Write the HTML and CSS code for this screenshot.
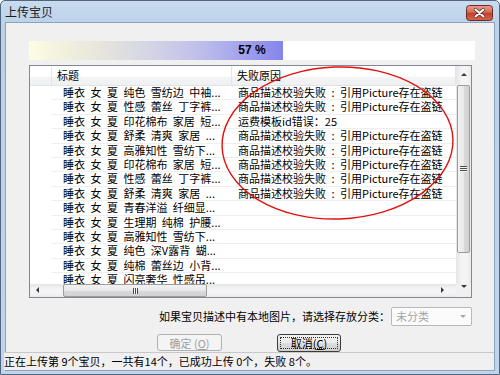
FILE: index.html
```html
<!DOCTYPE html>
<html lang="zh">
<head>
<meta charset="utf-8">
<title>上传宝贝</title>
<link rel="stylesheet" href="styles.css">
</head>
<body>
<div class="window">
  <div class="titlebar">
    <span class="title">上传宝贝</span>
    <div class="close">
      <svg width="27" height="16" viewBox="0 0 27 16">
        <defs>
          <linearGradient id="cg" x1="0" y1="0" x2="0" y2="1">
            <stop offset="0" stop-color="#e8a090"/>
            <stop offset="0.45" stop-color="#d46a58"/>
            <stop offset="0.5" stop-color="#c2402c"/>
            <stop offset="1" stop-color="#d5664c"/>
          </linearGradient>
        </defs>
        <rect x="0.5" y="0.5" width="26" height="15" rx="3" fill="url(#cg)" stroke="#6e2a22"/>
        <path d="M9.5 4.5 L17.5 11.5 M17.5 4.5 L9.5 11.5" stroke="#5a1e18" stroke-width="3.2" stroke-linecap="round"/>
        <path d="M9.5 4.5 L17.5 11.5 M17.5 4.5 L9.5 11.5" stroke="#ffffff" stroke-width="2" stroke-linecap="round"/>
      </svg>
    </div>
  </div>
  <div class="client">
    <div class="progress">
      <div class="fill" style="width:57%"></div>
      <span class="pct">57 %</span>
    </div>
    <div class="list">
      <div class="list-main">
        <div class="list-body">
          <div class="row head">
            <div class="cell rh"></div>
            <div class="cell c1">标题</div>
            <div class="cell c2">失败原因</div>
          </div>
          <div class="row"><div class="cell rh"></div><div class="cell c1">睡衣 女 夏 纯色 雪纺边 中袖...</div><div class="cell c2">商品描述校验失败 : 引用Picture存在盗链</div></div>
          <div class="row"><div class="cell rh"></div><div class="cell c1">睡衣 女 夏 性感 蕾丝 丁字裤...</div><div class="cell c2">商品描述校验失败 : 引用Picture存在盗链</div></div>
          <div class="row"><div class="cell rh"></div><div class="cell c1">睡衣 女 夏 印花棉布 家居 短...</div><div class="cell c2">运费模板id错误：25</div></div>
          <div class="row"><div class="cell rh"></div><div class="cell c1">睡衣 女 夏 舒柔 清爽 家居 ...</div><div class="cell c2">商品描述校验失败 : 引用Picture存在盗链</div></div>
          <div class="row"><div class="cell rh"></div><div class="cell c1">睡衣 女 夏 高雅知性 雪纺下...</div><div class="cell c2">商品描述校验失败 : 引用Picture存在盗链</div></div>
          <div class="row"><div class="cell rh"></div><div class="cell c1">睡衣 女 夏 印花棉布 家居 短...</div><div class="cell c2">商品描述校验失败 : 引用Picture存在盗链</div></div>
          <div class="row"><div class="cell rh"></div><div class="cell c1">睡衣 女 夏 性感 蕾丝 丁字裤...</div><div class="cell c2">商品描述校验失败 : 引用Picture存在盗链</div></div>
          <div class="row"><div class="cell rh"></div><div class="cell c1">睡衣 女 夏 舒柔 清爽 家居 ...</div><div class="cell c2">商品描述校验失败 : 引用Picture存在盗链</div></div>
          <div class="row"><div class="cell rh"></div><div class="cell c1">睡衣 女 夏 青春洋溢 纤细显...</div><div class="cell c2"></div></div>
          <div class="row"><div class="cell rh"></div><div class="cell c1">睡衣 女 夏 生理期 纯棉 护腰...</div><div class="cell c2"></div></div>
          <div class="row"><div class="cell rh"></div><div class="cell c1">睡衣 女 夏 高雅知性 雪纺下...</div><div class="cell c2"></div></div>
          <div class="row"><div class="cell rh"></div><div class="cell c1">睡衣 女 夏 纯色 深V露背 蝴...</div><div class="cell c2"></div></div>
          <div class="row"><div class="cell rh"></div><div class="cell c1">睡衣 女 夏 纯棉 蕾丝边 小背...</div><div class="cell c2"></div></div>
          <div class="row"><div class="cell rh"></div><div class="cell c1">睡衣 女 夏 闪亮奢华 性感吊...</div><div class="cell c2"></div></div>
        </div>
        <div class="vscroll">
          <div class="arrow up"></div>
          <div class="vtrack">
            <div class="vthumb"><span class="grip-h"></span></div>
          </div>
          <div class="arrow down"></div>
        </div>
      </div>
      <div class="hscroll-row">
        <div class="hscroll">
          <div class="arrow left"></div>
          <div class="htrack">
            <div class="hthumb"><span class="grip-v"></span></div>
          </div>
          <div class="arrow right"></div>
        </div>
        <div class="corner"></div>
      </div>
    </div>
    <div class="opts">
      <span class="opt-label">如果宝贝描述中有本地图片，请选择存放分类：</span>
      <div class="combo">
        <span class="combo-text">未分类</span>
        <span class="combo-arrow"></span>
      </div>
    </div>
    <div class="buttons">
      <div class="btn disabled">确定 (<u>O</u>)</div>
      <div class="btn focused"><span class="btn-inner">取消(<u>C</u>)</span></div>
    </div>
    <div class="status">正在上传第 9个宝贝，一共有14个，已成功上传 0个，失败 8个。</div>
  </div>
  <svg class="mark" width="500" height="375" viewBox="0 0 500 375">
    <ellipse cx="337.5" cy="143" rx="115.5" ry="76" fill="none" stroke="#e41010" stroke-width="1.4" transform="rotate(-2 337.5 143)"/>
  </svg>
</div>
</body>
</html>
```
FILE: styles.css
```css
* { box-sizing: border-box; }
html, body { margin: 0; padding: 0; }
body {
  width: 500px;
  height: 375px;
  overflow: hidden;
  font-family: "Noto Sans CJK SC", "Liberation Sans", sans-serif;
  font-size: 11px;
  color: #000;
  background: #ffffff;
}
.window {
  position: relative;
  width: 500px;
  height: 375px;
  border: 1px solid #50677f;
  border-radius: 5px 5px 0 0;
  background: linear-gradient(#c9dbee, #bcd2ea 22px, #c0d5eb);
  display: flex;
  flex-direction: column;
}
.titlebar {
  height: 21px;
  display: flex;
  align-items: center;
  padding: 0 4px 0 4px;
  flex: none;
}
.title {
  font-size: 12px;
  line-height: 14px;
  color: #1a1a1a;
  margin-top: 1px;
}
.close {
  margin-left: auto;
  margin-top: 2px;
  width: 27px;
  height: 16px;
  margin-right: 2px;
}
.close svg { display: block; }
.client {
  flex: 1;
  margin: 0 4px 4px 4px;
  border: 1px solid #8ca3bc;
  background: #f0f0f0;
  display: flex;
  flex-direction: column;
}
.progress {
  position: relative;
  margin: 18px 0 0 23px;
  width: 446px;
  height: 19px;
  background: #ffffff;
  flex: none;
}
.fill {
  height: 100%;
  background: linear-gradient(to right, #fefde4, #f2f2de 12%, #e4e4dd 30%, #d2d2e6 50%, #bdbdeb 68%, #a2a2ed 84%, #8585ea 100%);
}
.pct {
  position: absolute;
  left: 0;
  right: 0;
  top: 0;
  line-height: 19px;
  text-align: center;
  font-family: "Liberation Sans", sans-serif;
  font-weight: bold;
  font-size: 12px;
}
.list {
  margin: 5px 0 0 23px;
  width: 443px;
  height: 233px;
  border: 1px solid #828790;
  background: #ffffff;
  display: flex;
  flex-direction: column;
  flex: none;
}
.list-main {
  display: flex;
  height: 218px;
}
.list-body {
  width: 426px;
  overflow: hidden;
}
.row {
  display: grid;
  grid-template-columns: 22px 180px 224px;
  height: 14.4px;
  line-height: 13px;
  white-space: nowrap;
}
.cell {
  overflow: hidden;
  word-spacing: 3px;
}
.row .c1, .row .c2 { border-bottom: 1px solid #efefef; }
.row .c1 { padding-left: 11px; }
.row .c2 { padding-left: 6px; }
.row.head {
  height: 20px;
  line-height: 19px;
  background: linear-gradient(#ffffff 0, #ffffff 55%, #f3f4f6 55%, #eff0f2 100%);
}
.row.head .cell {
  border-bottom: 1px solid #e2e3e5;
  border-right: 1px solid #e3e4e6;
}
.row.head .c1 { padding-left: 5px; }
.row.head .c2 { padding-left: 5px; }

.vscroll {
  width: 15px;
  background: linear-gradient(to right, #e6e6e6, #f4f4f4 40%, #f4f4f4 70%, #eaeaea);
  display: flex;
  flex-direction: column;
  align-items: center;
}
.arrow { flex: none; position: relative; }
.arrow.up, .arrow.down { width: 15px; height: 17px; }
.arrow.up::after, .arrow.down::after {
  content: "";
  position: absolute;
  left: 5px;
  border-left: 3px solid transparent;
  border-right: 3px solid transparent;
}
.arrow.up::after { top: 7px; border-bottom: 3px solid #3a3a3a; }
.arrow.down::after { top: 8px; border-top: 3px solid #3a3a3a; }
.vtrack {
  flex: 1;
  width: 15px;
  padding: 2px 1px 24px 1px;
}
.vthumb {
  height: 168px;
  border: 1px solid #9c9c9c;
  border-radius: 2px;
  background: linear-gradient(to right, #f3f3f3, #e8e8e8 50%, #d9d9d9 51%, #d2d2d2);
  display: flex;
  align-items: center;
  justify-content: center;
}
.grip-h {
  width: 7px;
  height: 6px;
  background: repeating-linear-gradient(#4a4a4a 0 1px, #f4f4f4 1px 2px);
  margin-top: 0;
}
.hscroll-row {
  display: flex;
  height: 13px;
}
.hscroll {
  width: 426px;
  display: flex;
  align-items: stretch;
  background: linear-gradient(#e6e6e6, #f4f4f4 40%, #f4f4f4 70%, #eaeaea);
}
.arrow.left, .arrow.right { width: 17px; }
.arrow.left::after, .arrow.right::after {
  content: "";
  position: absolute;
  top: 3px;
  border-top: 3px solid transparent;
  border-bottom: 3px solid transparent;
}
.arrow.left::after { left: 6px; border-right: 3px solid #3a3a3a; }
.arrow.right::after { left: 2px; border-left: 3px solid #3a3a3a; }
.htrack {
  flex: 1;
  padding: 0 0 0 16px;
}
.hthumb {
  width: 144px;
  height: 13px;
  border: 1px solid #9c9c9c;
  border-radius: 2px;
  background: linear-gradient(#f3f3f3, #e8e8e8 50%, #d9d9d9 51%, #d2d2d2);
  display: flex;
  align-items: center;
  justify-content: center;
}
.grip-v {
  width: 5px;
  height: 6px;
  background: repeating-linear-gradient(to right, #4a4a4a 0 1px, #f4f4f4 1px 2px);
}
.corner {
  width: 15px;
  background: #f0f0f0;
}
.opts {
  margin: 9px 22px 0 0;
  height: 19px;
  display: flex;
  align-items: center;
  justify-content: flex-end;
  flex: none;
}
.opt-label {
  font-size: 11px;
  line-height: 19px;
  margin-right: 1px;
}
.combo {
  width: 81px;
  height: 19px;
  border: 1px solid #b8b8b8;
  border-radius: 2px;
  background: #fbfbfb;
  display: flex;
  align-items: center;
  position: relative;
}
.combo-text {
  color: #a4a4a4;
  padding-left: 4px;
  line-height: 17px;
}
.combo-arrow {
  position: absolute;
  right: 5px;
  top: 7px;
  border-left: 3px solid transparent;
  border-right: 3px solid transparent;
  border-top: 3px solid #a8a8a8;
}
.buttons {
  margin: 8px 0 0 151px;
  height: 18px;
  display: flex;
  gap: 55px;
  flex: none;
}
.btn {
  width: 65px;
  height: 18px;
  border: 1px solid #707070;
  border-radius: 3px;
  background: linear-gradient(#f2f2f2, #ebebeb 50%, #dddddd 51%, #cfcfcf);
  font-size: 11px;
  line-height: 16px;
  text-align: center;
  display: flex;
  align-items: center;
  justify-content: center;
}
.btn.disabled {
  border-color: #adb2b5;
  background: #f4f4f4;
  color: #a0a0a0;
  height: 17px;
}
.btn.focused {
  width: 64px;
  padding: 2px;
  border-color: #3c3c3c;
}
.btn-inner {
  width: 100%;
  height: 100%;
  border: 1px dotted #303030;
  line-height: 11px;
  display: flex;
  align-items: center;
  justify-content: center;
}
u { text-decoration: underline; text-underline-offset: 1px; }
.status {
  margin-top: auto;
  height: 18px;
  border-top: 1px solid #c8c8c8;
  background: #f0f0f0;
  font-size: 11px;
  line-height: 17px;
  padding-left: 0;
  margin-left: -2px;
  white-space: nowrap;
}
.mark {
  position: absolute;
  left: -1px;
  top: -1px;
  pointer-events: none;
}
```
